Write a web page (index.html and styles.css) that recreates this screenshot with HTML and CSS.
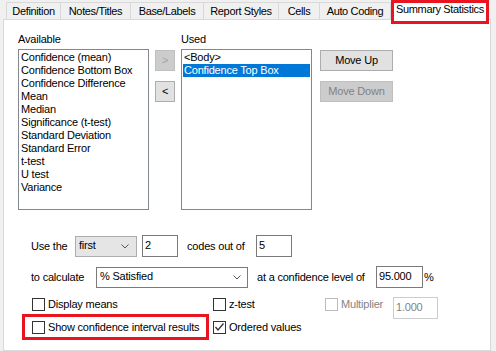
FILE: index.html
```html
<!DOCTYPE html>
<html>
<head>
<meta charset="utf-8">
<link rel="stylesheet" href="styles.css">
</head>
<body>
<div class="tabs">
  <div class="tab w55">Definition</div>
  <div class="tab w70">Notes/Titles</div>
  <div class="tab w73">Base/Labels</div>
  <div class="tab w75">Report Styles</div>
  <div class="tab w41">Cells</div>
  <div class="tab w71">Auto Coding</div>
  <div class="tab-active">Summary Statistics</div>
</div>
<div class="panel">
  <div class="top">
    <div class="listcol">
      <div class="lbl">Available</div>
      <div class="listbox">
        <div class="item">Confidence (mean)</div>
        <div class="item">Confidence Bottom Box</div>
        <div class="item">Confidence Difference</div>
        <div class="item">Mean</div>
        <div class="item">Median</div>
        <div class="item">Significance (t-test)</div>
        <div class="item">Standard Deviation</div>
        <div class="item">Standard Error</div>
        <div class="item">t-test</div>
        <div class="item">U test</div>
        <div class="item">Variance</div>
      </div>
    </div>
    <div class="arrows">
      <div class="btn small disabled">&gt;</div>
      <div class="btn small">&lt;</div>
    </div>
    <div class="listcol used">
      <div class="lbl">Used</div>
      <div class="listbox">
        <div class="item">&lt;Body&gt;</div>
        <div class="item sel">Confidence Top Box</div>
      </div>
    </div>
    <div class="moves">
      <div class="btn wide">Move Up</div>
      <div class="btn wide disabled">Move Down</div>
    </div>
  </div>

  <div class="row r1">
    <span class="txt w44">Use the</span>
    <div class="combo gray w62"><span>first</span><svg width="8" height="5" viewBox="0 0 8 5"><polyline points="0.5,0.5 4,4 7.5,0.5" fill="none" stroke="#555" stroke-width="1"/></svg></div>
    <div class="edit w36 ml5">2</div>
    <span class="txt ml9 w69">codes out of</span>
    <div class="edit w36">5</div>
  </div>
  <div class="row r2">
    <span class="txt w65">to calculate</span>
    <div class="combo white w152"><span>% Satisfied</span><svg width="8" height="5" viewBox="0 0 8 5"><polyline points="0.5,0.5 4,4 7.5,0.5" fill="none" stroke="#555" stroke-width="1"/></svg></div>
    <span class="txt ml9 w119">at a confidence level of</span>
    <div class="edit w47">95.000</div>
    <span class="txt ml1">%</span>
  </div>

  <div class="checks">
    <label class="chk"><span class="box"></span><span>Display means</span></label>
    <label class="chk"><span class="box"></span><span>z-test</span></label>
    <label class="chk dis"><span class="box"></span><span>Multiplier</span></label>
    <div class="edit w45 dis up1">1.000</div>
    <label class="chk hl"><span class="box"></span><span>Show confidence interval results</span></label>
    <label class="chk"><span class="box"><svg width="11" height="11" viewBox="0 0 11 11"><polyline points="1.5,5 4,8 9.5,1.5" fill="none" stroke="#333" stroke-width="1.3"/></svg></span><span>Ordered values</span></label>
  </div>
</div>
</body>
</html>
```
FILE: styles.css
```css
html, body {
  margin: 0;
  padding: 0;
}
body {
  width: 496px;
  height: 351px;
  overflow: hidden;
  background: #f0f0f0;
  font-family: "Liberation Sans", Arial, sans-serif;
  font-size: 11px;
  line-height: 13px;
  letter-spacing: -0.2px;
  color: #000;
}
.tabs {
  display: flex;
  align-items: flex-start;
  height: 19px;
  padding-left: 6px;
}
.tab {
  box-sizing: border-box;
  margin-top: 2px;
  height: 17px;
  padding-top: 2px;
  border-right: 1px solid #d9d9d9;
  border-top: 1px solid #d9d9d9;
  text-align: center;
  letter-spacing: -0.35px;
  white-space: nowrap;
}
.tab.w55 { width: 55px; border-left: 1px solid #d9d9d9; }
.w70 { width: 70px; }
.w73 { width: 73px; }
.w75 { width: 75px; }
.w41 { width: 41px; }
.w71 { width: 71px; }
.tab-active {
  position: relative;
  z-index: 1;
  box-sizing: border-box;
  width: 98px;
  height: 24px;
  flex: none;
  background: #fff;
  border: 3px solid #e8141f;
  padding-left: 2px;
  letter-spacing: -0.35px;
  white-space: nowrap;
}
.panel {
  box-sizing: border-box;
  margin-left: 3px;
  width: 488px;
  height: 332px;
  background: #fff;
  border: 1px solid #d9d9d9;
}
.top {
  display: flex;
  padding: 13px 0 0 14px;
}
.lbl {
  height: 13px;
  margin-bottom: 3px;
}
.listbox {
  box-sizing: border-box;
  width: 131px;
  height: 161px;
  border: 1px solid #828790;
  padding: 1px;
}
.item {
  height: 13px;
  padding-left: 1px;
  white-space: nowrap;
}
.item.sel {
  background: #0078d7;
  color: #fff;
}
.used { margin-left: 6px; }
.arrows, .moves {
  display: flex;
  flex-direction: column;
  gap: 10px;
  margin-top: 17px;
}
.arrows { margin-left: 6px; }
.moves { margin-left: 8px; }
.btn {
  box-sizing: border-box;
  height: 21px;
  display: flex;
  align-items: center;
  justify-content: center;
  background: #e1e1e1;
  border: 1px solid #adadad;
}
.btn.small { width: 20px; }
.btn.wide { width: 73px; }
.btn.disabled {
  background: #cccccc;
  border-color: #bfbfbf;
  color: #838383;
}
.btn.small.disabled { color: #a3a3a3; }
.row {
  display: flex;
  align-items: center;
  height: 22px;
  padding-left: 27px;
}
.r1 { margin-top: 25px; }
.r2 { margin-top: 9px; }
.txt { white-space: nowrap; }
.w44 { width: 44px; }
.w65 { width: 65px; }
.w69 { width: 69px; }
.w119 { width: 119px; }
.w36 { width: 36px; }
.w47 { width: 47px; }
.w45 { width: 45px; }
.w62 { width: 62px; }
.w152 { width: 152px; }
.ml5 { margin-left: 5px; }
.ml9 { margin-left: 9px; }
.ml1 { margin-left: 1px; }
.combo {
  box-sizing: border-box;
  height: 21px;
  display: flex;
  align-items: center;
  justify-content: space-between;
  padding: 0 7px 0 3px;
}
.combo.gray {
  background: #e5e5e5;
  border: 1px solid #adadad;
}
.combo.white {
  background: #fff;
  border: 1px solid #7a7a7a;
  padding-right: 6px;
}
.combo span { padding-bottom: 1px; }
.edit {
  box-sizing: border-box;
  height: 22px;
  border: 1px solid #7a7a7a;
  padding: 3px 0 0 2px;
  background: #fff;
}
.edit.dis {
  border-color: #cccccc;
  color: #838383;
}
.checks {
  display: grid;
  grid-template-columns: 181px 112px 68px auto;
  grid-template-rows: 23px 13px;
  align-items: start;
  justify-items: start;
  margin-top: 10px;
  padding-left: 28px;
}
.chk {
  display: flex;
  align-items: center;
  gap: 3px;
  height: 13px;
  white-space: nowrap;
}
.box {
  box-sizing: border-box;
  width: 13px;
  height: 13px;
  border: 1px solid #333;
  background: #fff;
  display: flex;
}
.box svg { display: block; }
.chk.dis { color: #838383; }
.chk.dis .box { border-color: #bcbcbc; }
.up1 { margin-top: -1px; }
.hl {
  box-sizing: border-box;
  width: 187px;
  height: 26px;
  margin: -7px 0 0 -10px;
  border: 3px solid #e8141f;
  padding: 4px 0 3px 7px;
}
```
